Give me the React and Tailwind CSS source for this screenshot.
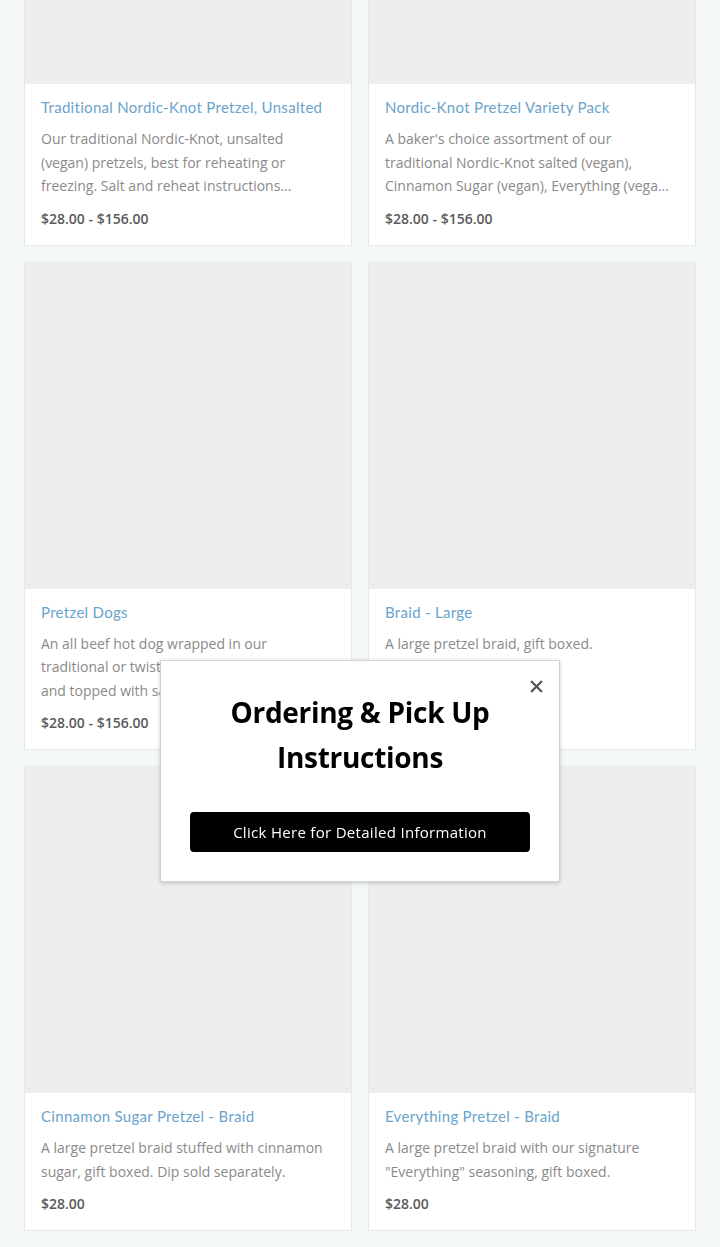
import { X } from "lucide-react";

const products = [
  {
    name: "Traditional Nordic-Knot Pretzel, Unsalted",
    desc: "Our traditional Nordic-Knot, unsalted (vegan) pretzels, best for reheating or freezing. Salt and reheat instructions included with every order for best results.",
    price: "$28.00 - $156.00",
  },
  {
    name: "Nordic-Knot Pretzel Variety Pack",
    desc: "A baker's choice assortment of our traditional Nordic-Knot salted (vegan), Cinnamon Sugar (vegan), Everything (vegan) and more.",
    price: "$28.00 - $156.00",
  },
  {
    name: "Pretzel Dogs",
    desc: "An all beef hot dog wrapped in our traditional or twisted Nordic-Knot pretzel and topped with salt.",
    price: "$28.00 - $156.00",
  },
  {
    name: "Braid - Large",
    desc: "A large pretzel braid, gift boxed.",
    price: "$28.00",
  },
  {
    name: "Cinnamon Sugar Pretzel - Braid",
    desc: "A large pretzel braid stuffed with cinnamon sugar, gift boxed. Dip sold separately.",
    price: "$28.00",
  },
  {
    name: "Everything Pretzel - Braid",
    desc: "A large pretzel braid with our signature \"Everything\" seasoning, gift boxed.",
    price: "$28.00",
  },
  { name: "Salted Pretzel - Braid", desc: "A large pretzel braid, gift boxed.", price: "$28.00" },
  { name: "Pretzel Bites", desc: "Bite sized pieces of our pretzel.", price: "$28.00" },
];

function ProductCard({ p }) {
  return (
    <div className="border border-[#e8e8e8] bg-white flex flex-col">
      <div className="h-[326px] bg-[#eeeeee]" />
      <div className="pl-4 pr-[22px] pt-[13px] pb-4">
        <h3 className="font-['Lato',sans-serif] text-[15px] leading-5 text-[#6aa3cc] tracking-[0.3px] whitespace-nowrap">
          {p.name}
        </h3>
        <p className="mt-[10px] font-['Open_Sans',sans-serif] text-[14px] leading-[23.5px] text-[#8a8a8a] line-clamp-3">
          {p.desc}
        </p>
        <div className="mt-[11px] font-['Open_Sans',sans-serif] text-[14px] leading-5 font-semibold text-[#5a5a5a]">
          {p.price}
        </div>
      </div>
    </div>
  );
}

export default function App() {
  return (
    <div className="min-h-[1247px] bg-[#f3f7f8] overflow-hidden">
      <div className="px-6 -mt-[243px] grid grid-cols-2 gap-4">
        {products.map((p) => (
          <ProductCard key={p.name} p={p} />
        ))}
      </div>

      {/* Popup */}
      <div className="fixed left-[160px] top-[660px] w-[400px] h-[222px] bg-white border border-[#d4d4d4] shadow-[0_1px_4px_rgba(0,0,0,0.2)] flex flex-col items-center">
        <button className="absolute right-[13px] top-[16px] text-[#555555]">
          <X size={19} strokeWidth={3} />
        </button>
        <h2 className="mt-[29px] text-center font-['Open_Sans',sans-serif] font-bold text-[28px] leading-[45px] text-black tracking-[-0.3px]">
          Ordering &amp; Pick Up
          <br />
          Instructions
        </h2>
        <button className="mt-[32px] w-[340px] h-10 rounded bg-black text-white font-['Open_Sans',sans-serif] text-[15px] tracking-[0.3px]">
          Click Here for Detailed Information
        </button>
      </div>
    </div>
  );
}
